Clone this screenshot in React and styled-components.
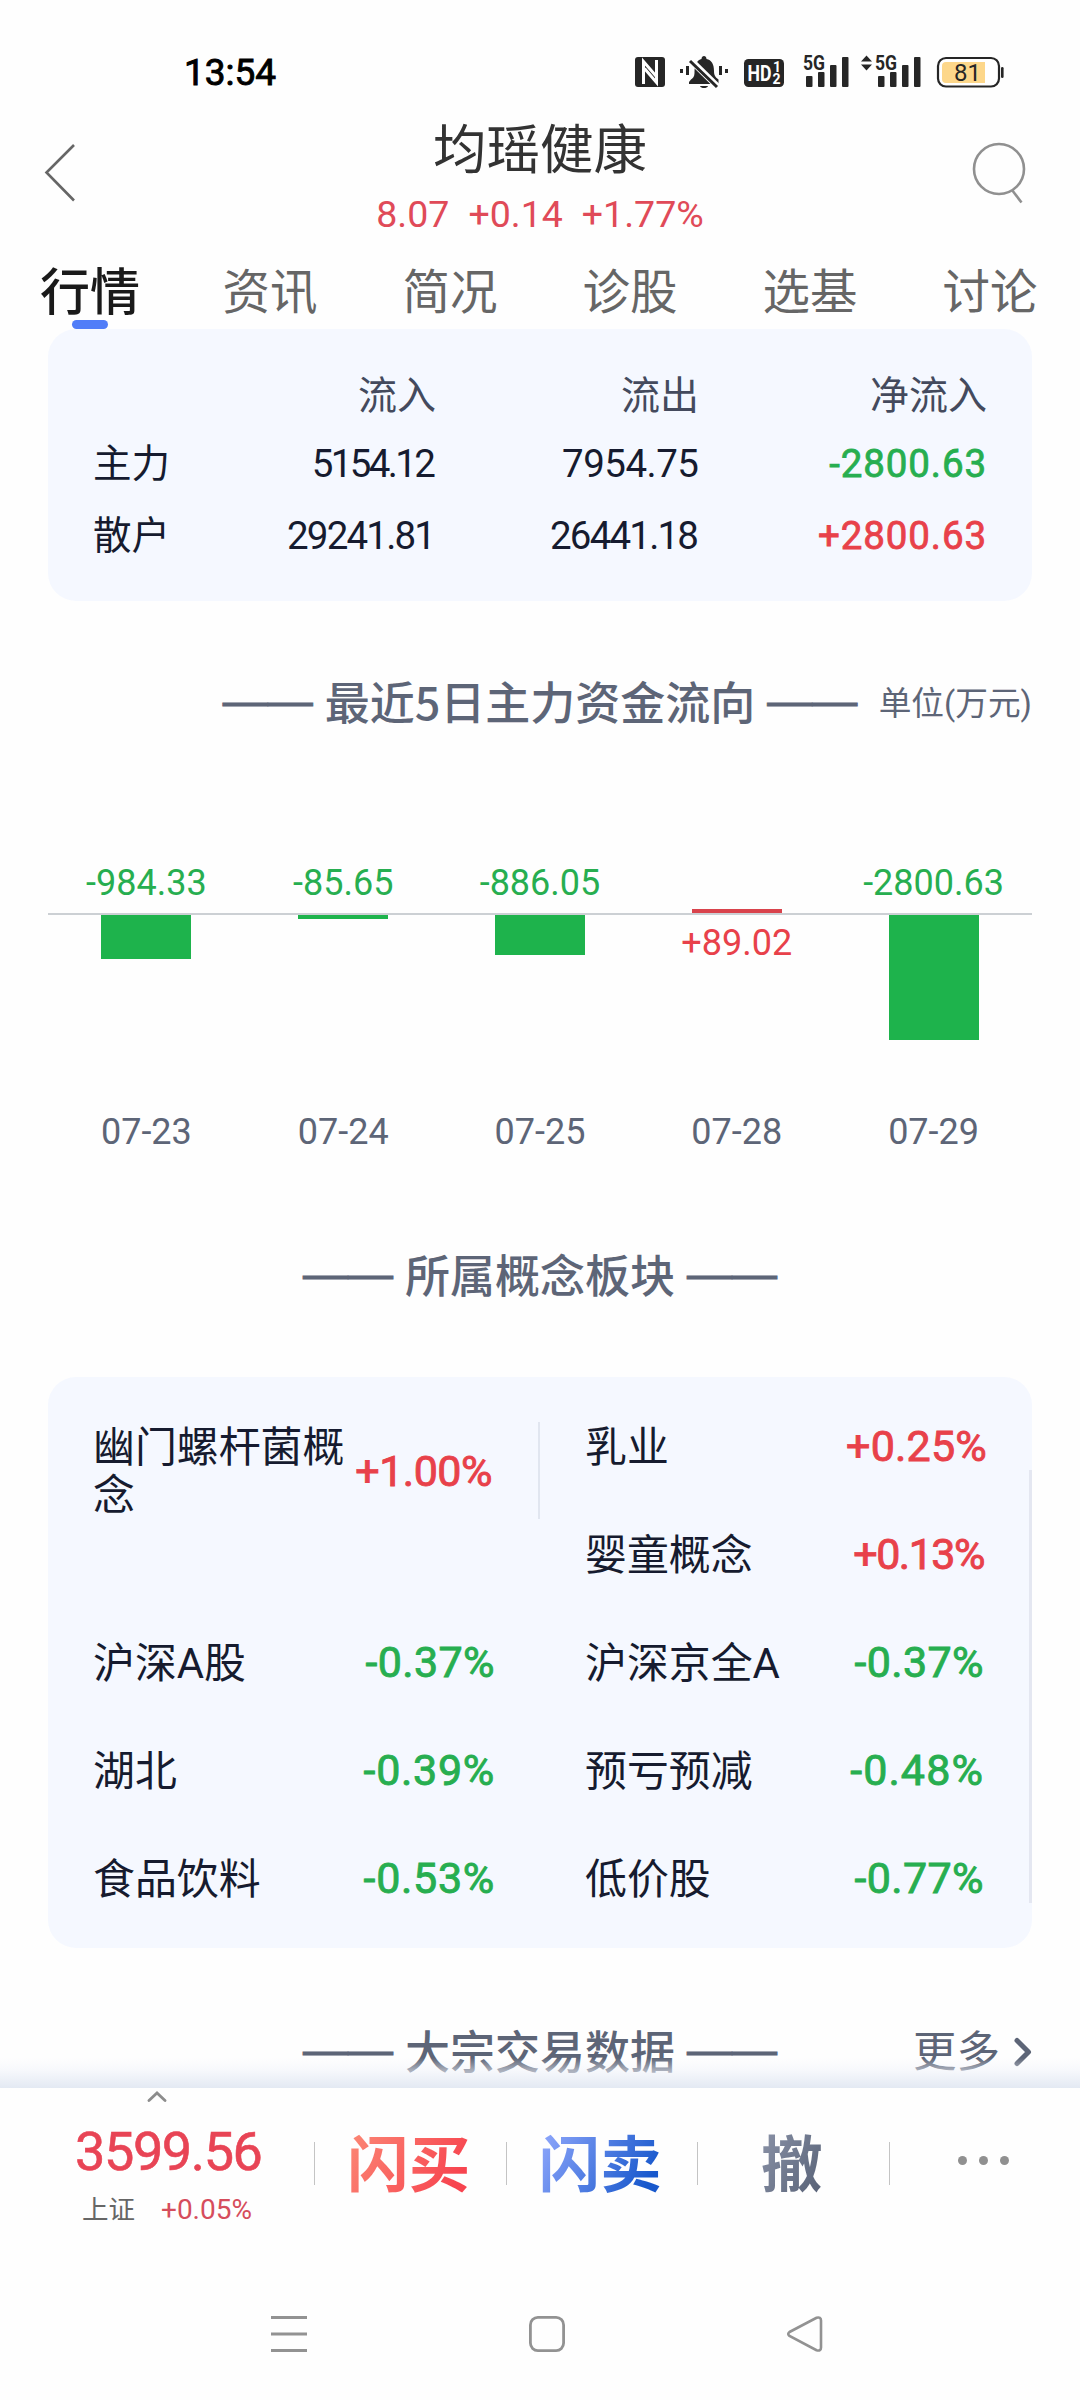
import React from 'react'
import styled, { createGlobalStyle } from 'styled-components'

const RED = '#e8414a'
const GREEN = '#27ae50'

const tabs = ['行情', '资讯', '简况', '诊股', '选基', '讨论']

const flows = [
    { name: '主力', inflow: ['5154.12', -2.6], outflow: ['7954.75', -0.5], net: '-2800.63' },
    { name: '散户', inflow: ['29241.81', -1.8], outflow: ['26441.18', -1.8], net: '+2800.63' },
]

const days = [
    { date: '07-23', value: -984.33 },
    { date: '07-24', value: -85.65 },
    { date: '07-25', value: -886.05 },
    { date: '07-28', value: 89.02 },
    { date: '07-29', value: -2800.63 },
]

const leftConcepts = [
    { name: '沪深A股', change: '-0.37%', track: 0.4 },
    { name: '湖北', change: '-0.39%', track: 0.7 },
    { name: '食品饮料', change: '-0.53%', track: 0.7 },
]

const rightConcepts = [
    { name: '婴童概念', change: '+0.13%', track: -1.5 },
    { name: '沪深京全A', change: '-0.37%', track: 0.4 },
    { name: '预亏预减', change: '-0.48%', track: 1.1 },
    { name: '低价股', change: '-0.77%', track: 0.4 },
]

const MAX_FLOW = 2800.63
const barHeight = (value) => Math.max(3, Math.round((Math.abs(value) / MAX_FLOW) * 125))
const label = (value) => (value > 0 ? `+${value}` : `${value}`)

const StatusIcons = () => (
    <svg width="370" height="56" viewBox="635 44 370 56" fill="#262626">
        {/* nfc */}
        <rect x="635" y="57" width="30" height="30" rx="3" />
        <path d="M643.500 84V61.500L656 76M656.500 60V82.500L644.500 68.500" fill="none" stroke="#fff" strokeWidth="3" />
        {/* muted bell */}
        <path d="M691 79.500c3-2 3.500-4 3.500-7.500 0-8 3-12 7-13 0-4 5-4 5 0 5 1 7.500 5 7.500 12 0 4 1 6 4.500 8.500V84H689v-2z" />
        <path d="M700 86h8c-1 2.800-7 2.800-8 0z" />
        <path d="M690 59.500l27.500 27" stroke="#fff" strokeWidth="6.500" />
        <path d="M690 61l27 26" stroke="#262626" strokeWidth="3" />
        <rect x="680" y="69" width="3" height="4" />
        <rect x="686" y="66" width="3" height="9" />
        <rect x="719" y="66" width="3" height="9" />
        <rect x="725" y="69" width="3" height="4" />
        {/* hd */}
        <rect x="744" y="59" width="40" height="28" rx="4.500" />
        <HdText x="747.500" y="81" textLength="24" lengthAdjust="spacingAndGlyphs">HD</HdText>
        <HdSmall x="773" y="72">1</HdSmall>
        <HdSmall x="772.500" y="84">2</HdSmall>
        {/* first sim */}
        <SimText x="803" y="70" textLength="22" lengthAdjust="spacingAndGlyphs">5G</SimText>
        <rect x="806" y="76" width="6.500" height="11" rx="1" />
        <rect x="818" y="72" width="6.500" height="15" rx="1" />
        <rect x="830" y="65" width="6.500" height="22" rx="1" />
        <rect x="842" y="57" width="6.500" height="30" rx="1" />
        {/* second sim */}
        <path d="M861 61.500l5.500-6 5.500 6zM861 64.500l5.500 6 5.500-6z" />
        <SimText x="875" y="70" textLength="22" lengthAdjust="spacingAndGlyphs">5G</SimText>
        <rect x="878" y="76" width="6.500" height="11" rx="1" />
        <rect x="890" y="72" width="6.500" height="15" rx="1" />
        <rect x="902" y="65" width="6.500" height="22" rx="1" />
        <rect x="914" y="57" width="6.500" height="30" rx="1" />
        {/* battery */}
        <rect x="938" y="58" width="61" height="28.500" rx="8" fill="#fff" stroke="#262626" strokeWidth="2.200" />
        <path d="M946 62H985V83H946a4 4 0 0 1-4-4V66a4 4 0 0 1 4-4z" fill="#fdd78a" />
        <BatteryText x="967.500" y="81" textAnchor="middle">81</BatteryText>
        <rect x="1001" y="67" width="2.600" height="11" rx="1.300" />
    </svg>
)

const SectionTitle = ({ children }) => (
    <TitleGroup>
        <Dash>——</Dash>
        <TitleText>{children}</TitleText>
        <Dash>——</Dash>
    </TitleGroup>
)

const Concept = ({ name, change, track }) => (
    <ConceptItem>
        <ConceptName>{name}</ConceptName>
        <Change $up={change.startsWith('+')} $track={track}>{change}</Change>
    </ConceptItem>
)

const App = () => {
    return (
        <Screen>
            <GlobalStyle />
            <StatusBar>
                <Clock>13:54</Clock>
                <StatusIcons />
            </StatusBar>
            <TitleBar>
                <BackButton>
                    <svg width="32" height="58" viewBox="0 0 32 58" fill="none" stroke="#666" strokeWidth="2.600">
                        <path d="M30 1L2.500 28.500L30 56.500" />
                    </svg>
                </BackButton>
                <Heading>
                    <StockName>均瑶健康</StockName>
                    <Quote>
                        <span>8.07</span>
                        <span>+0.14</span>
                        <span>+1.77%</span>
                    </Quote>
                </Heading>
                <SearchButton>
                    <svg width="54" height="62" viewBox="0 0 54 62" fill="none" stroke="#909090" strokeWidth="2.600">
                        <circle cx="27" cy="27" r="25" />
                        <path d="M40 48L49.500 60.500" />
                    </svg>
                </SearchButton>
            </TitleBar>
            <Tabs>
                {tabs.map((tab, i) => (
                    <Tab key={tab} $active={i === 0}>
                        {tab}
                        {i === 0 && <Indicator />}
                    </Tab>
                ))}
            </Tabs>

            <Content>
                <FlowCard>
                    <FlowHead>
                        <span />
                        <span>流入</span>
                        <span>流出</span>
                        <span>净流入</span>
                    </FlowHead>
                    {flows.map((flow) => (
                        <FlowRow key={flow.name}>
                            <FlowName>{flow.name}</FlowName>
                            <Amount $track={flow.inflow[1]}>{flow.inflow[0]}</Amount>
                            <Amount $track={flow.outflow[1]}>{flow.outflow[0]}</Amount>
                            <NetAmount $up={flow.net.startsWith('+')}>{flow.net}</NetAmount>
                        </FlowRow>
                    ))}
                </FlowCard>

                <Section $top={67}>
                    <SectionTitle>最近5日主力资金流向</SectionTitle>
                    <Unit>单位(万元)</Unit>
                </Section>
                <Chart>
                    <Above>
                        {days.map(({ date, value }) => (
                            <Column key={date}>
                                {value < 0 ? (
                                    <BarLabel>{label(value)}</BarLabel>
                                ) : (
                                    <Bar $up style={{ height: barHeight(value) }} />
                                )}
                            </Column>
                        ))}
                    </Above>
                    <Below>
                        {days.map(({ date, value }) => (
                            <Column key={date}>
                                {value < 0 ? (
                                    <Bar style={{ height: barHeight(value) }} />
                                ) : (
                                    <BarLabel $up>{label(value)}</BarLabel>
                                )}
                            </Column>
                        ))}
                    </Below>
                    <Dates>
                        {days.map(({ date }) => (
                            <Column key={date}>{date}</Column>
                        ))}
                    </Dates>
                </Chart>

                <Section $top={91}>
                    <SectionTitle>所属概念板块</SectionTitle>
                </Section>
                <ConceptCard>
                    <LeftColumn>
                        <FirstConcept>
                            <ConceptName $wrap>幽门螺杆菌概念</ConceptName>
                            <Change $up $track={-0.5}>+1.00%</Change>
                        </FirstConcept>
                        <ConceptList>
                            {leftConcepts.map((c) => (
                                <Concept key={c.name} {...c} />
                            ))}
                        </ConceptList>
                    </LeftColumn>
                    <RightColumn>
                        <TopConcept>
                            <ConceptName>乳业</ConceptName>
                            <Change $up $track={0.2}>+0.25%</Change>
                        </TopConcept>
                        <BorderedList>
                            {rightConcepts.map((c) => (
                                <Concept key={c.name} {...c} />
                            ))}
                        </BorderedList>
                    </RightColumn>
                </ConceptCard>

                <Section $top={68}>
                    <SectionTitle>大宗交易数据</SectionTitle>
                    <More>
                        更多
                        <svg width="18" height="30" viewBox="0 0 18 30" fill="none" stroke="#5d6577" strokeWidth="5" strokeLinecap="round" strokeLinejoin="round">
                            <path d="M3 3.500L14.500 15L3 26.500" />
                        </svg>
                    </More>
                </Section>
            </Content>

            <TradeBar>
                <IndexQuote>
                    <Caret width="20" height="11" viewBox="0 0 20 11" fill="none" stroke="#8c8c8c" strokeWidth="2.800" strokeLinecap="round">
                        <path d="M2 9.500L10 2L18 9.500" />
                    </Caret>
                    <IndexValue>3599.56</IndexValue>
                    <IndexInfo>
                        上证
                        <IndexChange>+0.05%</IndexChange>
                    </IndexInfo>
                </IndexQuote>
                <Action>
                    <ActionText $from="#fb8272" $to="#f7444f">闪买</ActionText>
                </Action>
                <Action>
                    <ActionText $from="#86a1f8" $to="#1858cc">闪卖</ActionText>
                </Action>
                <Action>
                    <ActionText $from="#868ea3" $to="#5c667b">撤</ActionText>
                </Action>
                <Action>
                    <Dots>
                        <i />
                        <i />
                        <i />
                    </Dots>
                </Action>
            </TradeBar>
            <SystemNav>
                <svg width="36" height="38" viewBox="0 0 36 38" stroke="#929292" strokeWidth="3.200">
                    <path d="M0 2.500H36M0 19H36M0 35.500H36" />
                </svg>
                <svg width="36" height="38" viewBox="0 0 36 38" fill="none" stroke="#929292" strokeWidth="2.800">
                    <rect x="1.400" y="2.400" width="33.200" height="33.200" rx="7.500" />
                </svg>
                <svg width="36" height="38" viewBox="0 0 36 38" fill="none" stroke="#929292" strokeWidth="2.600">
                    <path d="M2.500 17L29.500 2.800Q34 1.500 34 5.500V32.500Q34 36.500 29.500 35.200L2.500 21Q0 19 2.500 17Z" />
                </svg>
            </SystemNav>
        </Screen>
    )
}

export default App

const GlobalStyle = createGlobalStyle`
    * {
        box-sizing: border-box;
    }
    body {
        margin: 0;
        background: #fefefe;
        font-family: Roboto, "Noto Sans CJK SC", sans-serif;
    }
    svg {
        display: block;
        flex: none;
    }
`
const Screen = styled.div`
    width: 1080px;
    height: 2400px;
    overflow: hidden;
    display: flex;
    flex-direction: column;
    background: #fefefe;
`
const StatusBar = styled.div`
    height: 95px;
    padding: 49px 75px 0 184px;
    display: flex;
    align-items: center;
    justify-content: space-between;
`
const Clock = styled.div`
    padding-top: 2px;
    font-size: 37px;
    line-height: 46px;
    color: #000;
    -webkit-text-stroke: 0.9px #000;
`
const HdText = styled.text`
    font-family: Roboto, sans-serif;
    font-weight: 700;
    font-size: 22px;
    fill: #fff;
`
const HdSmall = styled.text`
    font-family: Roboto, sans-serif;
    font-weight: 700;
    font-size: 14px;
    fill: #fff;
`
const SimText = styled.text`
    font-family: Roboto, sans-serif;
    font-weight: 700;
    font-size: 20px;
    fill: #262626;
`
const BatteryText = styled.text`
    font-family: Roboto, sans-serif;
    font-size: 24px;
    fill: #262626;
`
const TitleBar = styled.div`
    height: 154px;
    display: grid;
    grid-template-columns: 1fr auto 1fr;
    align-items: start;
`
const BackButton = styled.div`
    padding: 49px 0 0 44px;
`
const SearchButton = styled.div`
    padding: 47px 54px 0 0;
    justify-self: end;
`
const Heading = styled.div`
    padding-top: 26px;
    text-align: center;
`
const StockName = styled.div`
    font-size: 53.5px;
    line-height: 60px;
    color: #333;
`
const Quote = styled.div`
    margin-top: 11px;
    display: flex;
    gap: 19px;
    justify-content: center;
    font-size: 37.5px;
    line-height: 44px;
    color: #e04a58;
`
const Tabs = styled.div`
    height: 80px;
    display: grid;
    grid-template-columns: repeat(6, 180px);
`
const Tab = styled.div`
    padding-top: 15px;
    display: flex;
    flex-direction: column;
    align-items: center;
    line-height: 58px;
    font-size: ${(p) => (p.$active ? '50px' : '47.5px')};
    font-weight: ${(p) => (p.$active ? 500 : 400)};
    color: ${(p) => (p.$active ? '#1a1a1a' : '#666')};
`
const Indicator = styled.div`
    width: 36px;
    height: 9px;
    margin-top: -2px;
    border-radius: 4.5px;
    background: #507df8;
`
const Content = styled.div`
    height: 1759px;
    padding: 0 48px;
`
const FlowCard = styled.div`
    height: 272px;
    padding: 33px 45px 0;
    border-radius: 28px;
    background: #f5f8ff;
`
const FlowRow = styled.div`
    display: grid;
    grid-template-columns: 100px 243px 263px 288px;
    height: 72px;
    line-height: 72px;
    font-size: 38.5px;
    text-align: right;
`
const FlowHead = styled(FlowRow)`
    height: 66px;
    line-height: 68px;
    font-size: 39px;
    color: #444a5d;
`
const FlowName = styled.div`
    text-align: left;
    color: #161b2f;
`
const Amount = styled.div`
    padding-right: ${(p) => -p.$track}px;
    color: #161b2f;
    letter-spacing: ${(p) => p.$track}px;
`
const NetAmount = styled.div`
    letter-spacing: 0.9px;
    color: ${(p) => (p.$up ? RED : GREEN)};
    -webkit-text-stroke: 0.8px ${(p) => (p.$up ? RED : GREEN)};
`
const Section = styled.div`
    margin-top: ${(p) => p.$top}px;
    height: 60px;
    display: grid;
    grid-template-columns: 1fr auto 1fr;
    align-items: center;
    color: #5d6577;
`
const TitleGroup = styled.div`
    grid-column: 2;
    display: flex;
    align-items: center;
    gap: 12px;
    font-size: 45px;
    line-height: 60px;
    white-space: nowrap;
`
const TitleText = styled.div`
    font-family: "Noto Sans CJK SC", sans-serif;
    font-weight: 500;
`
const Dash = styled.div`
    font-family: "Liberation Sans", sans-serif;
    -webkit-text-stroke: 0.9px #5d6577;
`
const Unit = styled.div`
    justify-self: end;
    font-size: 32.7px;
    line-height: 60px;
    padding-top: 6px;
    white-space: nowrap;
`
const More = styled.div`
    justify-self: end;
    display: flex;
    align-items: center;
    gap: 14px;
    font-size: 43.5px;
    line-height: 60px;
    padding-top: 7px;

    svg {
        margin-top: -3px;
    }
`
const Chart = styled.div`
    padding-top: 132px;
    font-size: 36px;
    line-height: 42px;
`
const Column = styled.div`
    flex: 1;
    display: flex;
    flex-direction: column;
    align-items: center;
`
const Above = styled.div`
    height: 55px;
    display: flex;
    border-bottom: 2px solid #ccd0d4;

    ${Column} {
        justify-content: flex-end;
    }
`
const Below = styled.div`
    height: 196px;
    display: flex;
`
const Dates = styled.div`
    display: flex;
    color: #5d6577;
`
const Bar = styled.div`
    width: 90px;
    background: ${(p) => (p.$up ? '#d9434c' : '#1eb34c')};
`
const BarLabel = styled.div`
    margin: ${(p) => (p.$up ? '7px 0 0' : '0 0 9px')};
    color: ${(p) => (p.$up ? RED : GREEN)};
`
const ConceptCard = styled.div`
    margin-top: 73px;
    height: 571px;
    padding-top: 45px;
    display: grid;
    grid-template-columns: 492px 492px;
    border-radius: 28px;
    background: #f5f8ff;
`
const LeftColumn = styled.div`
    display: flex;
    flex-direction: column;
`
const RightColumn = styled(LeftColumn)``
const ConceptItem = styled.div`
    height: 48px;
    padding: 0 45px;
    display: flex;
    align-items: center;
    justify-content: space-between;
`
const FirstConcept = styled(ConceptItem)`
    height: 97px;
    padding-right: 46px;
    border-right: 2px solid #e1e6f0;
`
const TopConcept = styled(ConceptItem)``
const ConceptList = styled.div`
    padding-top: 119px;
    display: flex;
    flex-direction: column;
    gap: 60px;
`
const BorderedList = styled.div`
    height: 433px;
    padding-top: 60px;
    display: flex;
    flex-direction: column;
    gap: 60px;
    border-right: 3px solid #e4e7f1;
`
const ConceptName = styled.div`
    width: ${(p) => (p.$wrap ? '254px' : 'auto')};
    padding-top: 3px;
    font-size: 41.9px;
    line-height: 48px;
    color: #161b2f;
`
const Change = styled.div`
    font-size: 43px;
    line-height: 48px;
    letter-spacing: ${(p) => p.$track || 0}px;
    color: ${(p) => (p.$up ? RED : GREEN)};
    -webkit-text-stroke: 0.9px ${(p) => (p.$up ? RED : GREEN)};
`
const TradeBar = styled.div`
    position: relative;
    height: 180px;
    display: grid;
    grid-template-columns: 314px repeat(4, 191.5px);

    &::before {
        content: '';
        position: absolute;
        left: 0;
        right: 0;
        bottom: 100%;
        height: 30px;
        background: linear-gradient(rgba(250, 251, 254, 0), rgba(240, 243, 250, 0.5) 40%, #e3e9f3);
    }
`
const IndexQuote = styled.div`
    padding: 3px 0 0 75px;
`
const Caret = styled.svg`
    margin-left: 72px;
`
const IndexValue = styled.div`
    margin-top: 19px;
    font-size: 54px;
    line-height: 62px;
    letter-spacing: -1.4px;
    color: #e84455;
    -webkit-text-stroke: 0.6px #e84455;
`
const IndexInfo = styled.div`
    margin-top: 12px;
    padding-left: 7px;
    display: flex;
    gap: 26px;
    font-size: 26.5px;
    line-height: 30px;
    color: #666;
`
const IndexChange = styled.span`
    font-size: 28px;
    color: #d64d5c;
`
const Action = styled.div`
    height: 154px;
    display: flex;
    align-items: center;
    justify-content: center;
    background: linear-gradient(#c4c4c4, #c4c4c4) 0 54px / 1px 43px no-repeat;
`
const ActionText = styled.div`
    padding-top: 2px;
    margin-right: 2px;
    font-size: 61.5px;
    font-weight: 700;
    line-height: 74px;
    color: transparent;
    background: linear-gradient(120deg, ${(p) => p.$from} 10%, ${(p) => p.$to} 85%);
    background-clip: text;
    -webkit-background-clip: text;
`
const Dots = styled.div`
    margin-top: -9px;
    margin-right: 2px;
    display: flex;
    gap: 11.5px;

    i {
        width: 9.5px;
        height: 9.5px;
        border-radius: 50%;
        background: #909090;
    }
`
const SystemNav = styled.div`
    height: 132px;
    padding-left: 271px;
    display: flex;
    align-items: center;
    gap: 222px;
`
